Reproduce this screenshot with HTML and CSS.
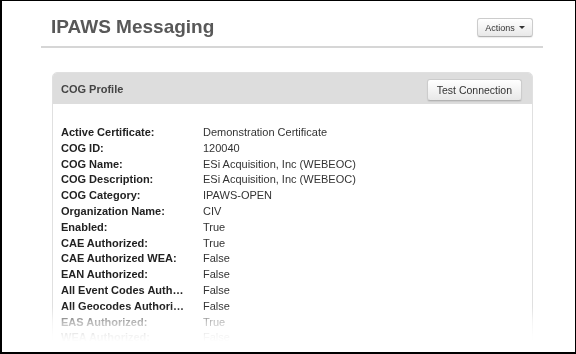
FILE: index.html
```html
<!DOCTYPE html>
<html>
<head>
<meta charset="utf-8">
<title>IPAWS Messaging</title>
<link rel="stylesheet" href="styles.css">
</head>
<body>
<div class="frame">
  <div class="page">
    <div class="page-header">
      <h1 class="title">IPAWS Messaging</h1>
      <button class="btn btn-small">Actions <span class="caret"></span></button>
    </div>
    <div class="panel">
      <div class="panel-heading">
        <span class="panel-title">COG Profile</span>
        <button class="btn">Test Connection</button>
      </div>
      <div class="panel-body">
        <dl class="props">
          <dt>Active Certificate:</dt><dd>Demonstration Certificate</dd>
          <dt>COG ID:</dt><dd>120040</dd>
          <dt>COG Name:</dt><dd>ESi Acquisition, Inc (WEBEOC)</dd>
          <dt>COG Description:</dt><dd>ESi Acquisition, Inc (WEBEOC)</dd>
          <dt>COG Category:</dt><dd>IPAWS-OPEN</dd>
          <dt>Organization Name:</dt><dd>CIV</dd>
          <dt>Enabled:</dt><dd>True</dd>
          <dt>CAE Authorized:</dt><dd>True</dd>
          <dt>CAE Authorized WEA:</dt><dd>False</dd>
          <dt>EAN Authorized:</dt><dd>False</dd>
          <dt title="All Event Codes Authorized:">All Event Codes Auth…</dt><dd>False</dd>
          <dt title="All Geocodes Authorized:">All Geocodes Authori…</dt><dd>False</dd>
          <dt>EAS Authorized:</dt><dd>True</dd>
          <dt>WEA Authorized:</dt><dd>False</dd>
        </dl>
      </div>
    </div>
  </div>
</div>
</body>
</html>
```

FILE: styles.css
```css
html, body {
  margin: 0;
  padding: 0;
  background: #fff;
}

.frame {
  width: 576px;
  height: 354px;
  box-sizing: border-box;
  border-style: solid;
  border-color: #000;
  border-width: 1px 1px 2px 2px;
  overflow: hidden;
  background: #fff;
  font-family: "Liberation Sans", Arial, sans-serif;
}

.page {
  height: 100%;
  padding: 0 32px 0 39px;
  -webkit-mask-image: linear-gradient(to bottom, #000 0, #000 306px, rgba(0,0,0,0.32) 321px, rgba(0,0,0,0.05) 335px, transparent 341px);
  mask-image: linear-gradient(to bottom, #000 0, #000 306px, rgba(0,0,0,0.32) 321px, rgba(0,0,0,0.05) 335px, transparent 341px);
}

.page-header {
  display: flex;
  justify-content: space-between;
  align-items: flex-start;
  padding: 15px 10px 8px 10px;
  border-bottom: 2px solid #d6d6d6;
}

.title {
  margin: 0;
  font-size: 19px;
  line-height: 22px;
  font-weight: bold;
  color: #585858;
}

.btn {
  font-family: "Liberation Sans", Arial, sans-serif;
  font-size: 10.5px;
  color: #333;
  height: 22px;
  padding: 0 9px;
  border: 1px solid #ccc;
  border-bottom-color: #b3b3b3;
  border-radius: 3px;
  background: linear-gradient(to bottom, #ffffff, #e8e8e8);
  box-shadow: 0 1px 1px rgba(0,0,0,0.08);
  cursor: pointer;
}

.btn-small {
  margin-top: 2px;
  height: 19px;
  width: 56px;
  padding: 0 6px;
  font-size: 9px;
  display: flex;
  align-items: center;
  justify-content: center;
  gap: 4px;
}

.caret {
  display: inline-block;
  width: 0;
  height: 0;
  border-left: 3px solid transparent;
  border-right: 3px solid transparent;
  border-top: 3px solid #333;
}

.panel {
  margin: 24px 10px 0 11px;
  border: 1px solid #e0e0e0;
  border-radius: 5px 5px 0 0;
}

.panel-heading {
  display: flex;
  justify-content: space-between;
  align-items: center;
  height: 31px;
  padding: 0 10px 0 8px;
  background: #dddddd;
  border-radius: 4px 4px 0 0;
}

.panel-title {
  font-size: 11px;
  font-weight: bold;
  color: #444;
  margin-top: 1px;
}

.panel-heading .btn {
  margin-top: 2px;
}

.panel-body {
  padding: 21px 8px 40px 8px;
}

.props {
  margin: 0;
  display: grid;
  grid-template-columns: 142px 1fr;
  font-size: 11px;
  line-height: 15.8px;
}

.props dt {
  margin: 0;
  font-weight: bold;
  color: #222;
  white-space: nowrap;
}

.props dd {
  margin: 0;
  color: #333;
  white-space: nowrap;
}
```
